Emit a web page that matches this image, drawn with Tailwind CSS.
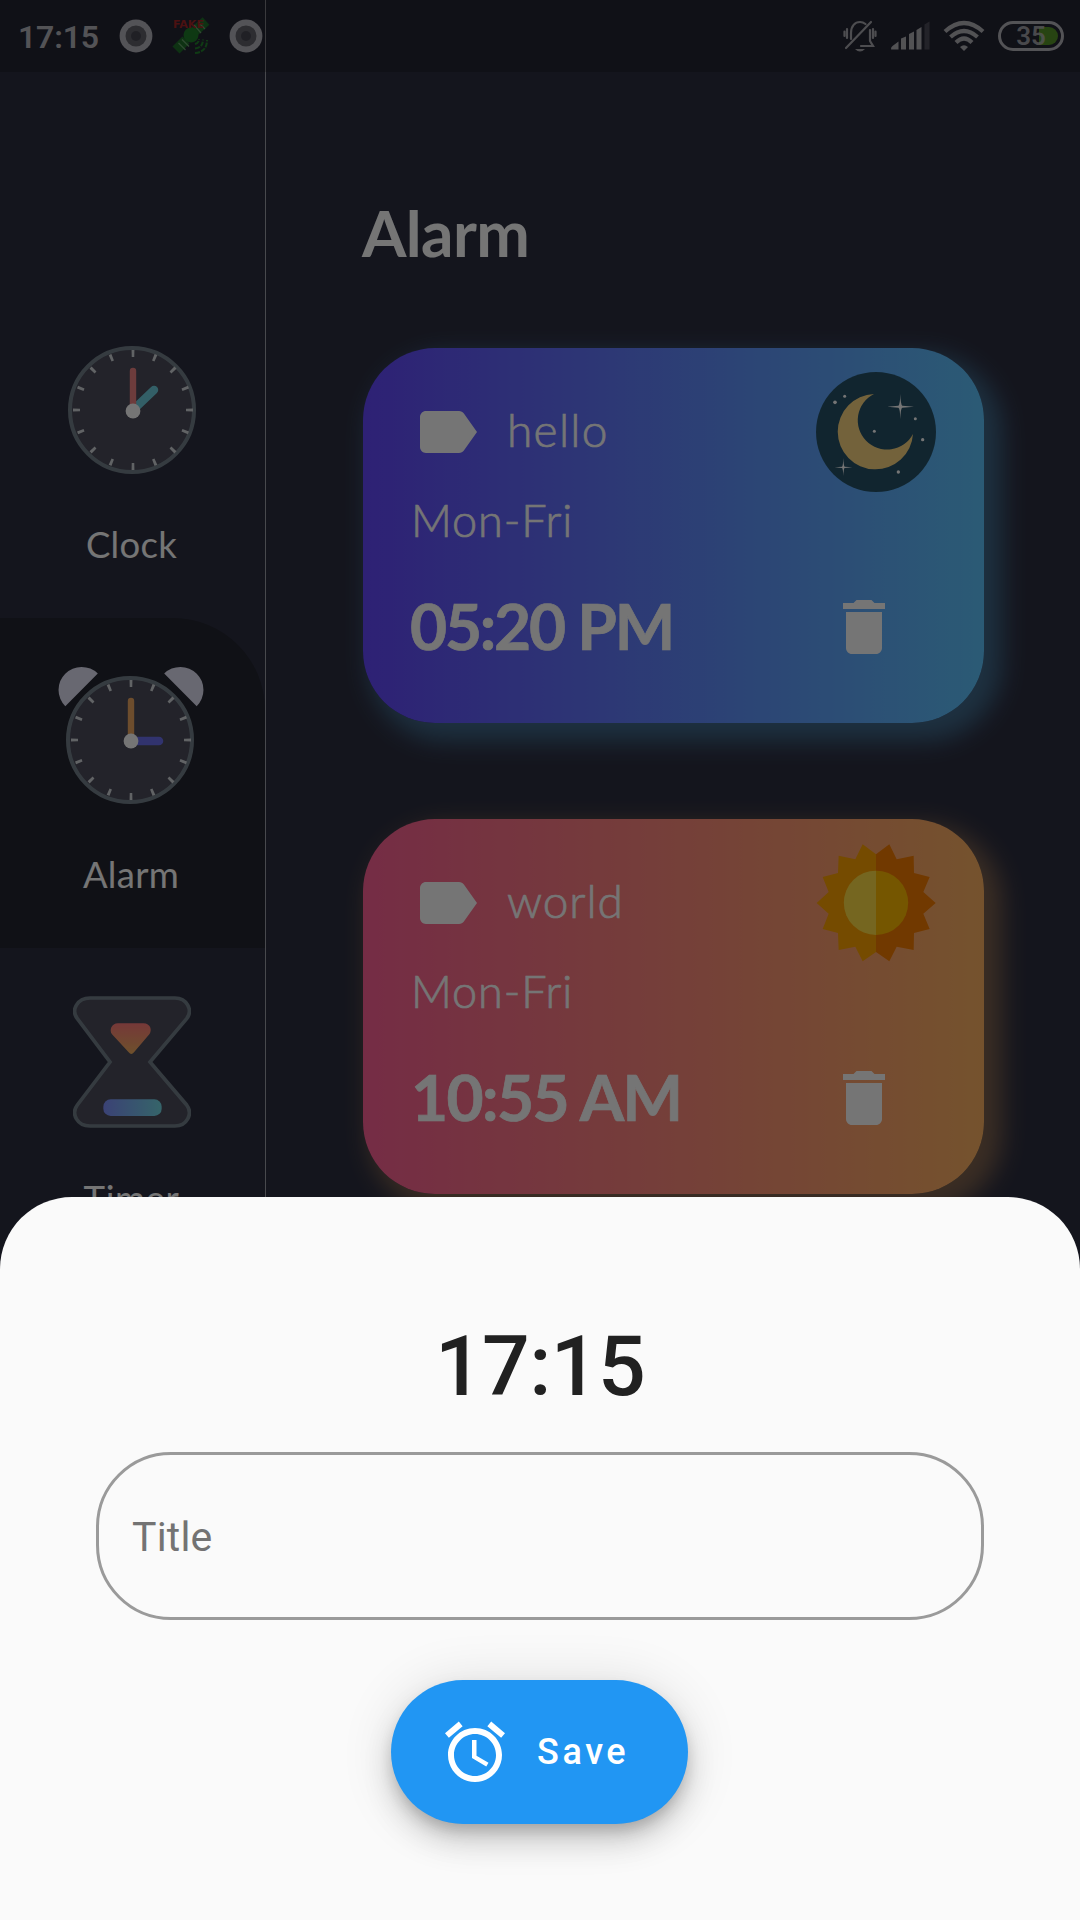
<!DOCTYPE html>
<html lang="en">
<head>
<meta charset="utf-8">
<title>Alarm</title>
<script src="https://cdn.jsdelivr.net/npm/@tailwindcss/browser@4"></script>
</head>
<body class="bg-[#2d2f41]">
<div class="relative h-[1920px] w-[1080px] overflow-hidden bg-[#2d2f41] font-['Lato',sans-serif] text-white">
  <!-- App content -->
  <div class="flex h-full">
    <nav class="flex w-[266px] flex-none flex-col border-r border-white/54 pt-[288px]">
      <div class="flex h-[330px] flex-col items-center pt-[58px] pr-[2px]">
        <svg class="h-[128px] w-[128px]" viewBox="0 0 128 128" fill="none">
          <circle cx="64" cy="64" r="62" fill="#4c4c5c" stroke="#75828c" stroke-width="4"/>
          <circle cx="65" cy="64" r="56.5" stroke="#d4d8dc" stroke-width="7" pathLength="128" stroke-dasharray="1 7" stroke-dashoffset=".5"/>
          <path d="M65 64 86 44" stroke="#6fd0e0" stroke-width="8.500" stroke-linecap="round"/>
          <path d="M65 64V25" stroke="#ee8484" stroke-width="6.4" stroke-linecap="round"/>
          <circle cx="65" cy="65" r="7.4" fill="#fff"/>
        </svg>
        <span class="mt-[50px] text-[36.500px] leading-[40px] tracking-[0.3px]">Clock</span>
      </div>
      <div class="flex h-[330px] flex-col items-center rounded-tr-[92px] bg-[#242630] pt-[48px] pr-[3px]">
        <svg class="h-[138px] w-[146px]" viewBox="0 0 146 138" fill="none">
          <path d="M7.300 40.200A23 23 0 0 1 39.800 7.600ZM138.700 40.200A23 23 0 0 0 106.200 7.600Z" fill="#e2e2f6"/>
          <circle cx="72" cy="74" r="62" fill="#4c4c5c" stroke="#75828c" stroke-width="4"/>
          <circle cx="73" cy="74" r="56.500" stroke="#d4d8dc" stroke-width="7" pathLength="128" stroke-dasharray="1 7" stroke-dashoffset=".5"/>
          <path d="M73 75h28" stroke="#6b70f0" stroke-width="8.500" stroke-linecap="round"/>
          <path d="M73 74V35" stroke="#eea862" stroke-width="6.400" stroke-linecap="round"/>
          <circle cx="73" cy="75" r="7.400" fill="#fff"/>
        </svg>
        <span class="mt-[50px] text-[36.500px] leading-[40px] tracking-[0.3px]">Alarm</span>
      </div>
      <div class="flex h-[330px] flex-col items-center pt-[48px] pr-[2px]">
        <svg class="h-[132px] w-[118px]" viewBox="99 78 354 396" fill="none">
          <defs>
            <linearGradient id="sand" x1="0" y1="0" x2="0" y2="1"><stop stop-color="#ff7b7b"/><stop offset="1" stop-color="#f0b060"/></linearGradient>
            <linearGradient id="base"><stop stop-color="#8090ff"/><stop offset="1" stop-color="#75dbe6"/></linearGradient>
          </defs>
          <path d="M150 84H405C440 84 460 120 440 146L330 276 440 405C460 432 440 468 405 468H150C112 468 92 432 112 405L210 276 112 146C92 120 112 84 150 84Z" fill="#4c4c5c" stroke="#75828c" stroke-width="11"/>
          <path d="M234 160H310C332 160 337 181 328 193L282 247Q274 257 266 247L216 193C207 181 214 160 234 160Z" fill="url(#sand)"/>
          <rect x="190" y="388" width="175" height="50" rx="22" fill="url(#base)"/>
        </svg>
        <span class="mt-[50px] text-[36.500px] leading-[40px] tracking-[0.6px]">Timer</span>
      </div>
    </nav>
    <main class="flex-1 pr-[96px] pl-[97px] pt-[193px]">
      <h1 class="-ml-px h-[155px] text-[64px] leading-[80px] font-bold tracking-[-0.6px]">Alarm</h1>
      <section class="mb-[96px] flex h-[375px] flex-col rounded-[72px] bg-linear-to-r/srgb from-[#6448fe] to-[#5fc6ff] py-[24px] pr-[48px] pl-[48px] shadow-[12px_12px_24px_6px_rgba(95,198,255,0.4)]">
        <div class="flex h-[120px] items-center">
          <svg class="h-[72px] w-[72px]" viewBox="0 0 24 24" fill="#fff"><path d="M17.630 5.840C17.270 5.330 16.670 5 16 5L5 5.010C3.900 5.010 3 5.900 3 7v10c0 1.100.900 1.990 2 1.990L16 19c.670 0 1.270-.330 1.630-.840L22 12l-4.370-6.160z"/></svg>
          <span class="mb-[4px] ml-[24px] flex-1 text-[46px] leading-[56px] font-light tracking-[1.300px] [-webkit-text-stroke:0.7px_white]">hello</span>
          <svg class="h-[120px] w-[120px]" viewBox="0 0 360 360">
            <circle cx="180" cy="180" r="180" fill="#275268"/>
            <path d="M174 66A113 113 0 1 0 291 186 88 88 0 1 1 174 66Z" fill="#fbd681"/>
            <g fill="#fff">
              <path d="M253 66Q254 99 259 101L294 104 259 107Q254 108 253 141 252 108 247 107L214 104 247 101Q252 99 253 66ZM82 258Q83 283 86 284L109 286 86 288Q83 289 82 312 81 289 78 288L56 286 78 284Q81 283 82 258Z"/>
              <circle cx="57" cy="91" r="5.500"/><circle cx="86" cy="73" r="4.500"/><circle cx="175" cy="178" r="4.500"/><circle cx="298" cy="140" r="4.500"/><circle cx="320" cy="203" r="5"/><circle cx="247" cy="300" r="5"/>
            </g>
          </svg>
        </div>
        <div class="h-[63px] text-[45px] leading-[57px] font-light tracking-[0.900px] [-webkit-text-stroke:0.7px_white]">Mon-Fri</div>
        <div class="flex h-[144px] items-center justify-between pr-[36px]">
          <span class="-ml-px mb-[3px] text-[64px] leading-[80px] font-bold tracking-[-2.200px] [-webkit-text-stroke:0.7px_white]">05:20 PM</span>
          <svg class="h-[72px] w-[72px]" viewBox="0 0 24 24" fill="#fff"><path d="M6 19c0 1.100.900 2 2 2h8c1.100 0 2-.900 2-2V7H6v12zM19 4h-3.500l-1-1h-5l-1 1H5v2h14V4z"/></svg>
        </div>
      </section>
      <section class="flex h-[375px] flex-col rounded-[72px] bg-linear-to-r/srgb from-[#fe6197] to-[#ffb463] py-[24px] pr-[48px] pl-[48px] shadow-[12px_12px_24px_6px_rgba(255,180,99,0.4)]">
        <div class="flex h-[120px] items-center">
          <svg class="h-[72px] w-[72px]" viewBox="0 0 24 24" fill="#fff"><path d="M17.630 5.840C17.270 5.330 16.670 5 16 5L5 5.010C3.900 5.010 3 5.900 3 7v10c0 1.100.900 1.990 2 1.990L16 19c.670 0 1.270-.330 1.630-.840L22 12l-4.370-6.160z"/></svg>
          <span class="mb-[4px] ml-[24px] flex-1 text-[46px] leading-[56px] font-light tracking-[0.900px] [-webkit-text-stroke:0.7px_white]">world</span>
          <svg class="h-[120px] w-[120px]" viewBox="408 159 360 360">
            <path d="M588 193 548 163 526 208 476 197 474 249 428 261 446 306 410 339 446 371 428 417 474 429 476 480 526 470 548 514 588 486Z" fill="#ffa300"/>
            <path d="M588 193 628 163 650 208 701 197 702 249 749 261 730 306 767 339 730 371 749 417 702 429 701 480 650 470 628 514 588 486Z" fill="#f77d00"/>
            <path d="M588 242A96.500 96.500 0 0 0 588 435Z" fill="#ffde46"/>
            <path d="M588 242A96.500 96.500 0 0 1 588 435Z" fill="#ffbc00"/>
          </svg>
        </div>
        <div class="h-[63px] text-[45px] leading-[57px] font-light tracking-[0.900px] [-webkit-text-stroke:0.7px_white]">Mon-Fri</div>
        <div class="flex h-[144px] items-center justify-between pr-[36px]">
          <span class="mb-[3px] text-[64px] leading-[80px] font-bold tracking-[-1.600px] [-webkit-text-stroke:0.7px_white]">10:55 AM</span>
          <svg class="h-[72px] w-[72px]" viewBox="0 0 24 24" fill="#fff"><path d="M6 19c0 1.100.900 2 2 2h8c1.100 0 2-.900 2-2V7H6v12zM19 4h-3.500l-1-1h-5l-1 1H5v2h14V4z"/></svg>
        </div>
      </section>
    </main>
  </div>

  <!-- Status bar -->
  <header class="absolute inset-x-0 top-0 flex h-[72px] items-center bg-black/20 pl-[18px] pr-[16px] font-['Roboto',sans-serif] text-[#b6b6bb]">
    <span class="mt-[2px] w-[101px] text-[32px] leading-[40px] font-semibold tracking-[-0.200px]">17:15</span>
    <svg class="h-[34px] w-[34px]" viewBox="0 0 34 34"><circle cx="17" cy="17" r="16.400" fill="#b6b6bd"/><circle cx="17" cy="17" r="10.500" fill="#62626c"/><circle cx="17" cy="17" r="5" fill="#474752"/></svg>
    <svg class="ml-[17px] h-[40px] w-[40px]" viewBox="0 0 40 40" fill="none">
      <path d="M6 34 16 24" stroke="#1f6e2a" stroke-width="10"/>
      <path d="M8.500 27l7 7M12 23.500l7 7" stroke="#66a06a" stroke-width="1.300"/>
      <path d="M25 15 36 5" stroke="#1f6e2a" stroke-width="10"/>
      <path d="M24 9l7 8M28 6l7 7" stroke="#66a06a" stroke-width="1.300"/>
      <circle cx="21" cy="19" r="7.500" fill="#1f7c2a"/>
      <path d="M25 28q4-1 4-5M25 32.500q8-1 8-9M25 37q12-1 12-13" stroke="#22802c" stroke-width="2" stroke-dasharray="5 1.200"/>
      <text x="3" y="11.500" font-family="DejaVu Sans, sans-serif" font-size="11" font-weight="700" fill="#a32626" textLength="31" lengthAdjust="spacingAndGlyphs">FAKE</text>
    </svg>
    <svg class="ml-[19px] h-[34px] w-[34px]" viewBox="0 0 34 34"><circle cx="17" cy="17" r="16.400" fill="#b6b6bd"/><circle cx="17" cy="17" r="10.500" fill="#62626c"/><circle cx="17" cy="17" r="5" fill="#474752"/></svg>
    <div class="flex-1"></div>
    <svg class="h-[34px] w-[34px]" viewBox="0 0 34 34" fill="none" stroke="#a9a9ae" stroke-width="2.200" stroke-linecap="round">
      <path d="M18 27h12l-3-5V11M8 20V14C8 7 12 3 17 3q3 0 5.500 2M4 10v9M1.500 12.500v4.500M30 10v9M32.500 12.500v4.500M28 3 3 29"/>
      <path d="M12 30h10q-5 5-10 0z" fill="#a9a9ae" stroke="none"/>
    </svg>
    <svg class="ml-[13px] h-[30px] w-[40px]" viewBox="0 0 40 30" fill="#b2b2b7">
      <path d="M1 28q0-2 1.500-3l6-4.500V28.500H2Q1 28.500 1 28ZM11 17.500l5-2v13h-5ZM19 13l5-2.500v18h-5ZM26.500 9l5-3v22.500h-5Z"/><path d="M34.500 3.500l5-3V28.500h-5Z" fill="#4e4e59"/>
    </svg>
    <svg class="ml-[13px] h-[32px] w-[42px]" viewBox="0 0 42 32" fill="none" stroke="#b2b2b7" stroke-width="4.200">
      <path d="M2 11.500Q21-5.500 40 11.500M7.500 17Q21 5 34.500 17M13 22.500Q21 14.500 29 22.500"/><path d="M17 27q4-3.500 8 0l-4 4z" fill="#b2b2b7" stroke="none"/>
    </svg>
    <div class="relative ml-[13px] flex h-[30px] w-[66px] items-center justify-center rounded-full border-[3px] border-[#b6b6bb]">
      <span class="absolute top-[3px] right-[3px] h-[18px] w-[19px] rounded-r-full bg-[#569428]"></span>
      <span class="relative text-[26px] leading-[30px] font-semibold text-[#b6b6bb]/85">35</span>
    </div>
  </header>

  <div class="absolute inset-0 bg-black/54"></div>

  <!-- Bottom sheet -->
  <div class="absolute inset-x-0 bottom-0 flex h-[723px] flex-col items-center rounded-t-[72px] bg-[#fafafa] px-[96px] pt-[121px] font-['Roboto',sans-serif]">
    <div class="text-[84px] leading-[98px] font-medium tracking-[-0.600px] text-[#212121]">17:15</div>
    <div class="mt-[36px] flex h-[168px] w-full items-center rounded-[75px] border-[3px] border-[#9a9a9a] px-[33px] pt-[3px] text-[41px] tracking-[0.200px] text-[#737373]">Title</div>
    <button class="mt-[60px] mr-px flex h-[144px] w-[297px] items-center rounded-full bg-[#2196f3] pl-[48px] text-[36px] font-medium tracking-[3.6px] text-white shadow-[0_9px_15px_-3px_rgba(0,0,0,0.2),0_18px_30px_0_rgba(0,0,0,0.14),0_3px_54px_0_rgba(0,0,0,0.12)]">
      <svg class="mr-[26px] h-[72px] w-[72px]" viewBox="0 0 24 24" fill="#fff"><path d="M22 5.720l-4.600-3.860-1.290 1.530 4.600 3.860L22 5.720zM7.880 3.390L6.600 1.860 2 5.710l1.290 1.530 4.590-3.850zM12.500 8H11v6l4.750 2.850.750-1.230-4-2.370V8zM12 4c-4.970 0-9 4.030-9 9s4.020 9 9 9c4.970 0 9-4.030 9-9s-4.030-9-9-9zm0 16c-3.870 0-7-3.130-7-7s3.130-7 7-7 7 3.130 7 7-3.130 7-7 7z"/></svg>
      <span>Save</span>
    </button>
  </div>
</div>
</body>
</html>
